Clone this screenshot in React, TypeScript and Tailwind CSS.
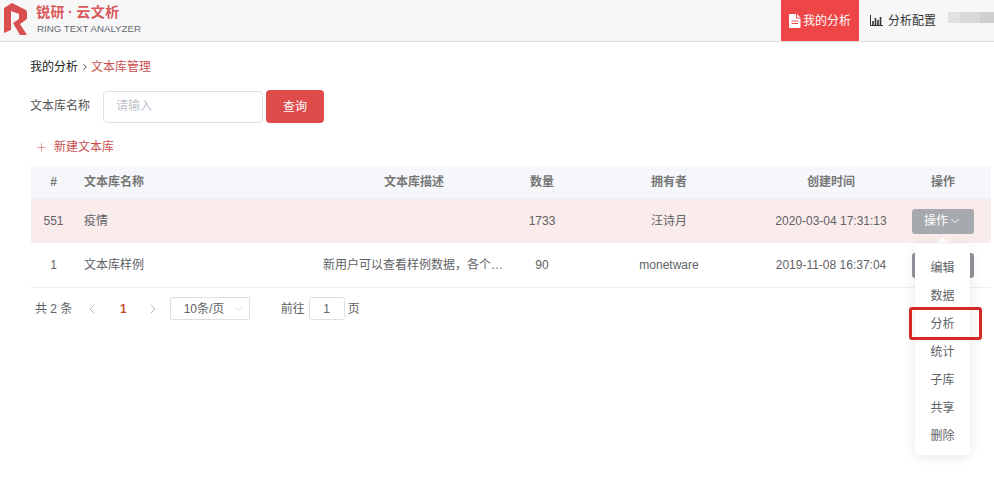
import { ChevronDown, ChevronLeft, ChevronRight, Plus } from 'lucide-react';

const cols = 'grid grid-cols-[45px_239px_198px_58px_196px_128px_96px] items-center';
const menuItems = ['编辑', '数据', '分析', '统计', '子库', '共享', '删除'];

function Logo() {
  return (
    <svg width="24" height="34" viewBox="0 0 24 34" className="ml-[4px] mt-[2px] shrink-0">
      <path
        d="M0 6 L8 1 L22 8 L23 10 L23 17 L16 22 L23 33 L16 33 L9 21 L15 17 L15 12 L7 9 L7 28 L0 31 Z"
        fill="#d94f50"
      />
    </svg>
  );
}

function Header() {
  return (
    <header className="h-[42px] bg-[#f7f7f8] border-b border-[#dcdcdc] flex items-stretch">
      <Logo />
      <div className="ml-[8px] pt-[3px] flex flex-col">
        <span className="text-[14px] leading-[19px] font-bold tracking-[0.5px] text-[#d9585a] flex items-center">
          锐研
          <span className="mx-[3px]">·</span>
          云文析
        </span>
        <span className="text-[9.7px] leading-[12px] mt-[1px] ml-[1px] text-[#666a70]">RING TEXT ANALYZER</span>
      </div>
      <div className="ml-auto flex items-stretch">
        <div className="w-[78px] h-[41px] bg-[#ee4646] text-white text-[12px] flex items-center justify-center gap-[2px]">
          <svg width="12" height="14" viewBox="0 0 12 14" fill="#fff">
            <path d="M1 0 H7 V4.5 H11.5 V13 Q11.5 14 10.5 14 H1 Q0 14 0 13 V1 Q0 0 1 0 Z M8 0 L11.5 3.5 H8 Z" />
            <path d="M2.5 7 H9 M2.5 9.5 H9" stroke="#ee4646" strokeWidth="1" />
          </svg>
          <span>我的分析</span>
        </div>
        <div className="ml-[11px] flex items-center gap-[5px] text-[12px] text-[#333]">
          <svg width="13" height="11" viewBox="0 0 13 11" fill="none" stroke="#333">
            <path d="M0.5 0 V10.5 H13" />
            <path d="M3 10 V6 M5.5 10 V3 M8 10 V5 M10.5 10 V2" strokeWidth="1.6" />
          </svg>
          <span>分析配置</span>
        </div>
        <div className="ml-[12px] mt-[12px] h-[11px] w-[46px] flex">
          <div className="w-[12px] bg-[#e2e2e2]" />
          <div className="w-[20px] bg-[#d9d9d9]" />
          <div className="w-[14px] bg-[#cfcfcf]" />
        </div>
      </div>
    </header>
  );
}

function Toolbar() {
  return (
    <>
      <div className="text-[12px] leading-[18px] flex items-center">
        <span className="text-[#222]">我的分析</span>
        <ChevronRight size={10} strokeWidth={2} className="mx-[1.5px] text-[#333]" />
        <span className="text-[#c9504f]">文本库管理</span>
      </div>
      <div className="mt-[14px] flex items-center">
        <span className="w-[73px] pb-[1px] text-[12px] text-[#555]">文本库名称</span>
        <div className="w-[160px] h-[32px] rounded-[4px] border border-[#dcdfe6] bg-white pl-[12px] text-[12px] leading-[28px] text-[#c0c4cc]">
          请输入
        </div>
        <button className="ml-[3px] w-[58px] h-[33px] rounded-[4px] bg-[#dd4b4b] text-white text-[12px]">查询</button>
      </div>
      <div className="mt-[15px] h-[18px] pl-[5px] flex items-center gap-[6px] text-[12px] text-[#c9504f]">
        <Plus size={13} strokeWidth={1} />
        <span>新建文本库</span>
      </div>
    </>
  );
}

function Table() {
  return (
    <div className="mt-[10px] ml-[1px] w-[960px] text-[12px]">
      <div className={`${cols} h-[33px] bg-[#f5f7fa] border-b border-[#ebeef5] font-bold text-[#777]`}>
        <span className="text-center">#</span>
        <span className="pl-[8px]">文本库名称</span>
        <span className="text-center">文本库描述</span>
        <span className="text-center">数量</span>
        <span className="text-center">拥有者</span>
        <span className="text-center">创建时间</span>
        <span className="text-center">操作</span>
      </div>
      <div className={`${cols} h-[45px] pb-[1px] bg-[#fbecec] border-b border-white text-[#606266]`}>
        <span className="text-center">551</span>
        <span className="pl-[8px]">疫情</span>
        <span />
        <span className="text-center">1733</span>
        <span className="text-center">汪诗月</span>
        <span className="text-center">2020-03-04 17:31:13</span>
        <div className="flex justify-center">
          <button className="mt-[1px] w-[62px] h-[25px] rounded-[3px] bg-[#a6a9ad] text-white flex items-center justify-center">
            操作
            <ChevronDown size={14} strokeWidth={1.5} />
          </button>
        </div>
      </div>
      <div className={`${cols} h-[44px] pb-[1px] border-b border-[#ebeef5] text-[#606266]`}>
        <span className="text-center">1</span>
        <span className="pl-[8px]">文本库样例</span>
        <span className="px-[8px] truncate">新用户可以查看样例数据，各个功能模块的使用</span>
        <span className="text-center">90</span>
        <span className="text-center">monetware</span>
        <span className="text-center">2019-11-08 16:37:04</span>
        <div className="flex justify-center">
          <button className="w-[62px] h-[25px] rounded-[3px] bg-[#909399]" />
        </div>
      </div>
    </div>
  );
}

function Pagination() {
  return (
    <div className="mt-[9px] ml-[5px] h-[23px] flex items-center text-[12px] text-[#606266]">
      <span className="w-[38px] whitespace-pre">共 2 条</span>
      <ChevronLeft size={16} strokeWidth={1.5} className="ml-[11px] text-[#b5b8be]" />
      <span className="ml-[20px] font-bold text-[#c9502f]">1</span>
      <ChevronRight size={16} strokeWidth={1.5} className="ml-[18px] text-[#b5b8be]" />
      <div className="ml-[9px] w-[80px] h-[23px] border border-[#dcdfe6] rounded-[2px] pl-[13px] pr-[4px] flex items-center justify-between">
        <span>10条/页</span>
        <ChevronDown size={12} strokeWidth={1} className="text-[#b5b8be]" />
      </div>
      <span className="ml-[31px]">前往</span>
      <div className="ml-[4px] w-[36px] h-[23px] border border-[#dcdfe6] rounded-[3px] flex items-center justify-center">1</div>
      <span className="ml-[3px]">页</span>
    </div>
  );
}

function ActionMenu() {
  return (
    <>
      <div className="absolute left-[938px] top-[239px] w-[10px] h-[10px] rotate-45 bg-white" />
      <div className="absolute left-[915px] top-[244px] w-[55px] h-[211px] bg-white rounded-[4px] shadow-[0_2px_12px_rgba(0,0,0,0.1)] pt-[10px] text-[12px] text-[#606266]">
        {menuItems.map((item) => (
          <div key={item} className="h-[28px] leading-[28px] text-center">
            {item}
          </div>
        ))}
      </div>
      <div className="absolute left-[909px] top-[307px] w-[73px] h-[33px] rounded-[3px] border-[3px] border-[#d42a26]" />
    </>
  );
}

export default function App() {
  return (
    <div
      className="relative w-[994px] h-[480px] overflow-hidden bg-white"
      style={{ fontFamily: '"Liberation Sans", "Noto Sans CJK SC", sans-serif' }}
    >
      <Header />
      <main className="pl-[30px] pt-[16px]">
        <Toolbar />
        <Table />
        <Pagination />
      </main>
      <ActionMenu />
    </div>
  );
}
